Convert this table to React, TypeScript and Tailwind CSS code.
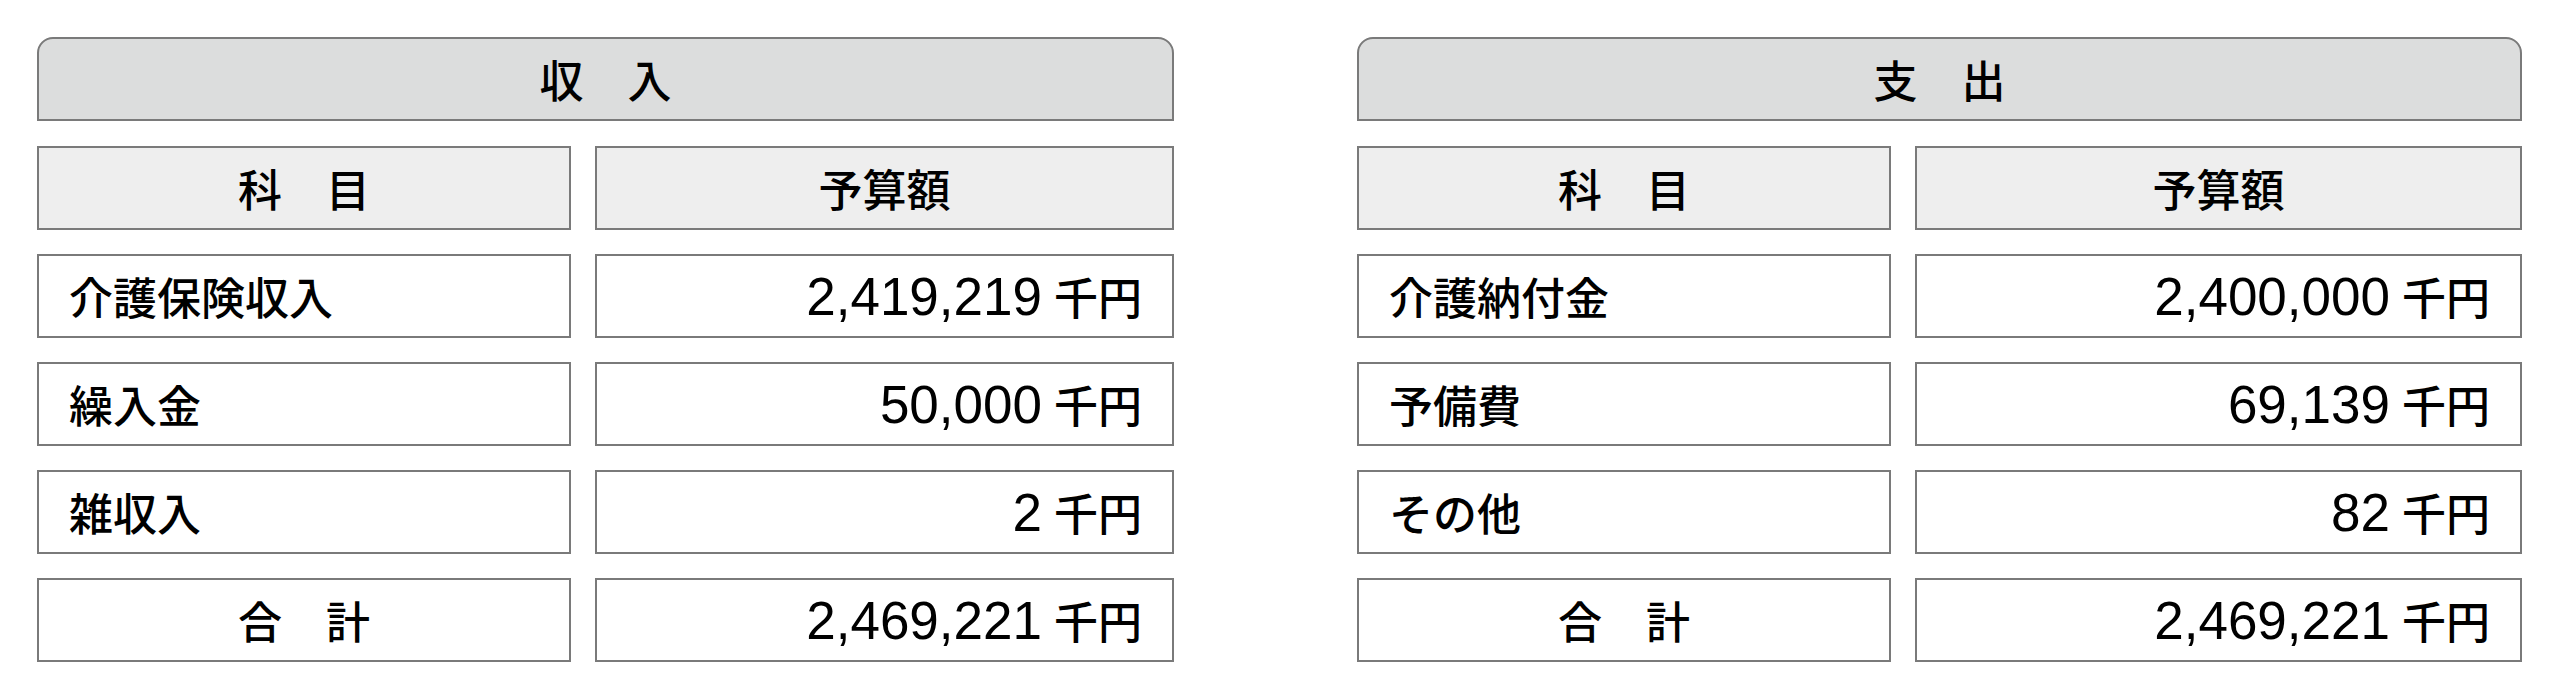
const INCOME = {
  title: "収\u3000入",
  amountCol: "w-[579px]",
  rows: [
    { label: "介護保険収入", value: "2,419,219" },
    { label: "繰入金", value: "50,000" },
    { label: "雑収入", value: "2" },
  ],
  total: "2,469,221",
};

const EXPENSE = {
  title: "支\u3000出",
  amountCol: "w-[607px]",
  rows: [
    { label: "介護納付金", value: "2,400,000" },
    { label: "予備費", value: "69,139" },
    { label: "その他", value: "82" },
  ],
  total: "2,469,221",
};

const CJK = "font-['Noto_Sans_CJK_JP',sans-serif] font-medium";
const NUM = "font-['Liberation_Sans_Narrow','Liberation_Sans','Noto_Sans_CJK_JP',sans-serif]";

function Amount({ value }: { value: string }) {
  return (
    <span className="flex items-center">
      <span className={`${NUM} text-[53px] leading-none`}>{value}</span>
      <span className={`${CJK} text-[44px] leading-none ml-[12px]`}>千円</span>
    </span>
  );
}

function Budget({ data }: { data: typeof INCOME }) {
  const cell = "h-[84px] border-2 border-[#7a7a7a] flex items-center text-black";
  return (
    <div className="flex flex-col">
      <div
        className={`${cell} ${CJK} justify-center rounded-t-[16px] bg-[#dcdddd] text-[44px] mb-[25px]`}
      >
        {data.title}
      </div>
      <div className="flex flex-col gap-6">
        <div className="flex gap-6">
          <div className={`${cell} ${CJK} w-[534px] justify-center bg-[#eeeeee] text-[44px]`}>
            科{"\u3000"}目
          </div>
          <div className={`${cell} ${CJK} ${data.amountCol} justify-center bg-[#eeeeee] text-[44px]`}>
            予算額
          </div>
        </div>
        {data.rows.map(r => (
          <div key={r.label} className="flex gap-6">
            <div className={`${cell} ${CJK} w-[534px] bg-white pl-[30px] text-[44px]`}>
              {r.label}
            </div>
            <div className={`${cell} ${data.amountCol} justify-end bg-white pr-[30px]`}>
              <Amount value={r.value} />
            </div>
          </div>
        ))}
        <div className="flex gap-6">
          <div className={`${cell} ${CJK} w-[534px] justify-center bg-white text-[44px]`}>
            合{"\u3000"}計
          </div>
          <div className={`${cell} ${data.amountCol} justify-end bg-white pr-[30px]`}>
            <Amount value={data.total} />
          </div>
        </div>
      </div>
    </div>
  );
}

export default function App() {
  return (
    <div className="min-h-[700px] w-[2560px] bg-white pt-[37px] pl-[37px] flex gap-[183px]">
      <Budget data={INCOME} />
      <Budget data={EXPENSE} />
    </div>
  );
}
